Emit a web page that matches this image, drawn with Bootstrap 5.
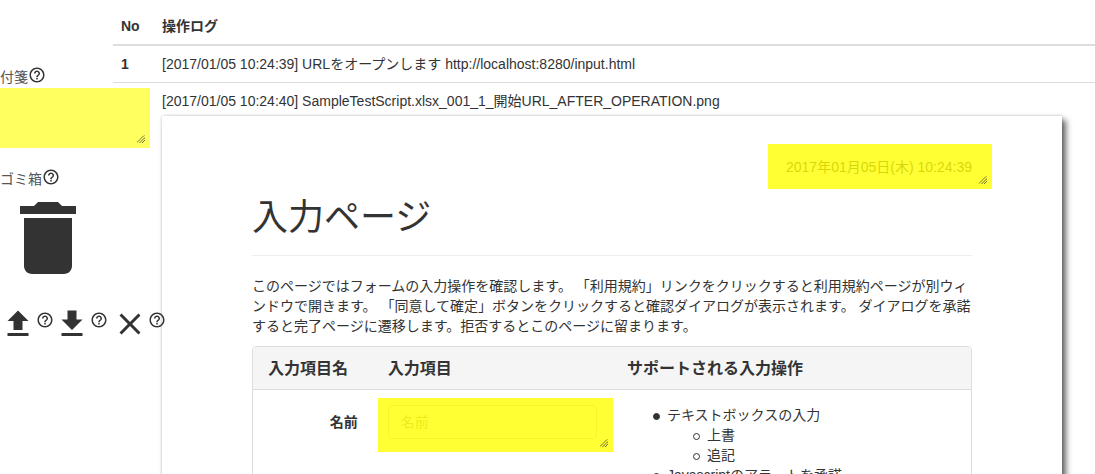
<!DOCTYPE html>
<html lang="ja">
<head>
<meta charset="utf-8">
<meta name="viewport" content="width=device-width, initial-scale=1">
<title>操作ログ</title>
<link href="https://cdn.jsdelivr.net/npm/bootstrap@5.3.0/dist/css/bootstrap.min.css" rel="stylesheet">
<script src="https://cdn.jsdelivr.net/npm/bootstrap@5.3.0/dist/js/bootstrap.bundle.min.js"></script>
<style>
  body { font: 14px/20px "Liberation Sans", "Noto Sans CJK JP", sans-serif; color: #333; background: #fff; }
  svg { fill: currentColor; display: block; }

  /* Tool column: its contents may reach over the log */
  .tools { width: 113px; padding-top: 67px; z-index: 2; }
  .tools .caption { height: 20px; color: #555; }
  .tools .note-stock + .caption { margin-top: 21px; }
  .icon-btn { border: 0; background: none; padding: 0; color: #333; }
  .caption .icon-btn { margin-top: -1px; height: 18px; }
  .trash { margin-top: 1px; }
  .toolbar { margin-top: 20px; }
  .toolbar .help { padding-top: 5px; }

  /* Sticky notes */
  .note { background: rgba(255, 255, 0, .8); }
  .note textarea { resize: none; border: 0; background: none; outline: 0; padding: 5px; }
  .note .grip { position: absolute; right: 5px; bottom: 5px; stroke: #333; }
  .note-stock { width: 150px; height: 60px; margin-top: 1px; background: #ffff60; }
  .note-date { top: 28px; right: 70px; width: 224px; height: 45px; }
  .note-name { top: -7px; left: 5px; right: -1px; height: 54px; }

  /* Log */
  .log { margin-top: 8px; --bs-table-bg: transparent; --bs-table-color: #333; color: #333; }
  .log th, .log td { padding: 8px; border: 0; }
  .log thead th { border-bottom: 2px solid #ddd; }
  .log tbody tr + tr > * { border-top: 1px solid #ddd; }
  .log .num { width: 41px; }

  /* Captured page */
  .shot { max-width: 900px; margin-top: 5px; padding: 41px 90px 40px; background: #fff; box-shadow: 4px 4px 6px rgba(0, 0, 0, .6), 0 0 3px rgba(0, 0, 0, .2); }
  .shot h1 { font-size: 36px; line-height: 40px; font-weight: 400; margin: 21px 0 20px; padding-bottom: 17px; border-bottom: 1px solid #eee; }
  .shot p { margin-bottom: 10px; }
  .panel-box { border: 1px solid #ddd; border-radius: 4px; }
  .panel-box .row { --bs-gutter-x: 30px; margin: 0; }
  .panel-top { background: #f5f5f5; border-bottom: 1px solid #ddd; border-radius: 3px 3px 0 0; padding: 12px 0 10px; font-size: 16px; font-weight: 700; }
  .panel-main { padding: 15px 0; }
  .panel-main label { padding-top: 7px; font-weight: 700; }
  .panel-main input { height: 34px; padding: 6px 12px; font-size: 14px; border: 1px solid #ccc; border-radius: 4px; }
  .panel-main input::placeholder { color: #999; }
  .panel-main ul { padding-left: 40px; margin: 0; list-style: none; }
  .panel-main li::before { content: ""; float: left; width: 7px; height: 7px; margin: 8px 0 0 -14px; border: 1px solid #333; border-radius: 50%; background: #333; }
  .panel-main li li::before { background: none; }
</style>
</head>
<body>
<svg class="d-none" aria-hidden="true">
  <symbol id="help" viewBox="0 0 24 24"><path d="M11 18h2v-2h-2v2zm1-16C6.48 2 2 6.48 2 12s4.48 10 10 10 10-4.48 10-10S17.52 2 12 2zm0 18c-4.41 0-8-3.59-8-8s3.59-8 8-8 8 3.59 8 8-3.59 8-8 8zm0-14c-2.21 0-4 1.79-4 4h2c0-1.1.9-2 2-2s2 .9 2 2c0 2-3 1.75-3 5h2c0-2.25 3-2.5 3-5 0-2.21-1.79-4-4-4z"/></symbol>
  <symbol id="grip" viewBox="0 0 8 8"><path d="M0 7.500L7.500 0M2.500 8L8 2.500M5 8L8 5" fill="none" stroke-dasharray="1 .4"/></symbol>
</svg>
<div class="d-flex vh-100 overflow-hidden">
  <aside class="tools flex-shrink-0 position-relative">
    <div class="caption d-flex align-items-start">
      <label for="stock">付箋</label>
      <button class="icon-btn" type="button" aria-label="ヘルプ"><svg width="18" height="18"><use href="#help"/></svg></button>
    </div>
    <div class="note note-stock position-relative">
      <textarea id="stock" class="w-100 h-100 d-block"></textarea>
      <svg class="grip" width="8" height="8"><use href="#grip"/></svg>
    </div>
    <div class="caption d-flex align-items-start">
      <span>ゴミ箱</span>
      <button class="icon-btn" type="button" aria-label="ヘルプ"><svg width="18" height="18"><use href="#help"/></svg></button>
    </div>
    <button class="icon-btn trash d-block" type="button" aria-label="ゴミ箱"><svg width="96" height="96" viewBox="0 0 24 24"><path d="M6 19c0 1.1.9 2 2 2h8c1.1 0 2-.9 2-2V7H6v12zM19 4h-3.500l-1-1h-5l-1 1H5v2h14V4z"/></svg></button>
    <div class="toolbar d-flex align-items-start">
      <button class="icon-btn" type="button" aria-label="アップロード"><svg width="36" height="36" viewBox="0 0 24 24"><path d="M9 16h6v-6h4l-7-7-7 7h4zm-4 2h14v2H5z"/></svg></button>
      <button class="icon-btn help" type="button" aria-label="ヘルプ"><svg width="18" height="18"><use href="#help"/></svg></button>
      <button class="icon-btn" type="button" aria-label="ダウンロード"><svg width="36" height="36" viewBox="0 0 24 24"><path d="M19 9h-4V3H9v6H5l7 7 7-7zM5 18v2h14v-2H5z"/></svg></button>
      <button class="icon-btn help" type="button" aria-label="ヘルプ"><svg width="18" height="18"><use href="#help"/></svg></button>
      <button class="icon-btn ms-1" type="button" aria-label="閉じる"><svg width="36" height="36" viewBox="0 0 24 24"><path d="M19 6.410L17.590 5 12 10.590 6.410 5 5 6.410 10.590 12 5 17.590 6.410 19 12 13.410 17.590 19 19 17.590 13.410 12z"/></svg></button>
      <button class="icon-btn help" type="button" aria-label="ヘルプ"><svg width="18" height="18"><use href="#help"/></svg></button>
    </div>
  </aside>

  <main class="flex-grow-1">
    <table class="table log mb-0">
      <thead>
        <tr><th class="num" scope="col">No</th><th scope="col">操作ログ</th></tr>
      </thead>
      <tbody>
        <tr><th scope="row">1</th><td>[2017/01/05 10:24:39] URLをオープンします http://localhost:8280/input.html</td></tr>
        <tr>
          <th scope="row"></th>
          <td>
            <div>[2017/01/05 10:24:40] SampleTestScript.xlsx_001_1_開始URL_AFTER_OPERATION.png</div>
            <article class="shot position-relative">
              <div class="text-end">2017年01月05日(木) 10:24:39</div>
              <div class="note note-date position-absolute">
                <textarea class="w-100 h-100 d-block" aria-label="付箋"></textarea>
                <svg class="grip" width="8" height="8"><use href="#grip"/></svg>
              </div>
              <h1>入力ページ</h1>
              <p class="text-nowrap">このページではフォームの入力操作を確認します。 「利用規約」リンクをクリックすると利用規約ページが別ウィ<br>ンドウで開きます。 「同意して確定」ボタンをクリックすると確認ダイアログが表示されます。 ダイアログを承諾<br>すると完了ページに遷移します。拒否するとこのページに留まります。</p>
              <section class="panel-box">
                <div class="panel-top">
                  <div class="row">
                    <div class="col-2 text-nowrap">入力項目名</div>
                    <div class="col-4">入力項目</div>
                    <div class="col-6">サポートされる入力操作</div>
                  </div>
                </div>
                <div class="panel-main">
                  <div class="row">
                    <label class="col-2 text-end" for="name">名前</label>
                    <div class="col-4 position-relative">
                      <input id="name" class="form-control" type="text" placeholder="名前">
                      <div class="note note-name position-absolute">
                        <textarea class="w-100 h-100 d-block" aria-label="付箋"></textarea>
                        <svg class="grip" width="8" height="8"><use href="#grip"/></svg>
                      </div>
                    </div>
                    <div class="col-6">
                      <ul>
                        <li>テキストボックスの入力
                          <ul><li>上書</li><li>追記</li></ul>
                        </li>
                        <li>Javascriptのアラートを承諾</li>
                      </ul>
                    </div>
                  </div>
                </div>
              </section>
            </article>
          </td>
        </tr>
      </tbody>
    </table>
  </main>
</div>
</body>
</html>
